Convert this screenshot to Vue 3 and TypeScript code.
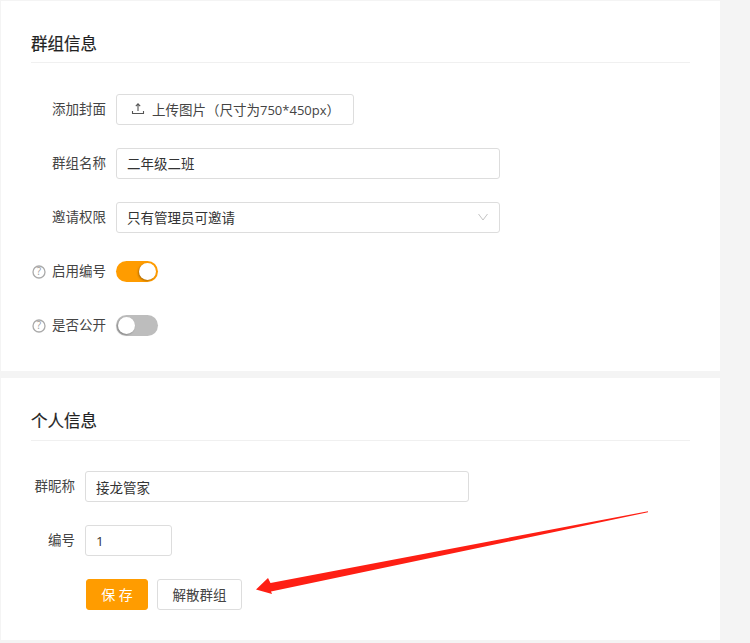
<template>
  <div class="page">
    <section class="card card-group">
      <h3 class="card-title">群组信息</h3>
      <div class="form form-group">
        <div class="form-row">
          <label class="row-label">添加封面</label>
          <button class="upload-btn" type="button">
            <svg class="upload-icon" width="14" height="14" viewBox="0 0 14 14" fill="none" stroke="#555" stroke-width="1.1">
              <path d="M7 9V2M4.8 4.1 7 1.9l2.2 2.2M1.5 9v2.5h11V9" />
            </svg>
            <span>上传图片（尺寸为<span class="latin">750*450px</span>）</span>
          </button>
        </div>
        <div class="form-row">
          <label class="row-label">群组名称</label>
          <input class="text-input wide" type="text" value="二年级二班">
        </div>
        <div class="form-row">
          <label class="row-label">邀请权限</label>
          <div class="text-input wide select">
            <span>只有管理员可邀请</span>
            <svg width="10" height="8" viewBox="0 0 10 8" fill="none" stroke="#c4c4c4" stroke-width="1">
              <path d="M.5 1 5 7l4.5-6" />
            </svg>
          </div>
        </div>
        <div v-for="sw in switches" :key="sw.label" class="form-row switch-row">
          <label class="row-label">
            <svg class="help" width="14" height="14" viewBox="0 0 14 14">
              <circle cx="7" cy="7" r="6" fill="none" stroke="#aaa" stroke-width="1.3" />
              <text x="7" y="10.4" text-anchor="middle" font-size="10" fill="#999">?</text>
            </svg>
            <span>{{ sw.label }}</span>
          </label>
          <span class="switch" :class="{ on: sw.on }"><i class="knob"></i></span>
        </div>
      </div>
    </section>

    <section class="card card-personal">
      <h3 class="card-title personal-title">个人信息</h3>
      <div class="form form-personal">
        <div class="form-row">
          <label class="row-label short">群昵称</label>
          <input class="text-input wide low" type="text" value="接龙管家">
        </div>
        <div class="form-row">
          <label class="row-label short">编号</label>
          <input class="text-input small low" type="text" value="1">
        </div>
        <div class="actions">
          <button class="btn primary" type="button">保 存</button>
          <button class="btn" type="button">解散群组</button>
        </div>
      </div>
    </section>

    <svg class="arrow" width="750" height="643" viewBox="0 0 750 643">
      <path d="M648 511.2 270.5 583 268 578 256 589.5 272 594 271 591.5 648 512.2Z" fill="#fe1f14" />
    </svg>
  </div>
</template>

<script setup lang="ts">
const switches = [
  { label: '启用编号', on: true },
  { label: '是否公开', on: false },
]
</script>

<style>
html,
body {
  margin: 0;
  background: #f4f4f4;
}
</style>

<style scoped>
.page {
  position: relative;
  width: 750px;
  height: 643px;
  overflow: hidden;
  padding: 1px 30px 0 1px;
  box-sizing: border-box;
  background: #f4f4f4;
  font-family: "Open Sans", "Noto Sans CJK SC", sans-serif;
  color: #333;
}

.card {
  background: #fff;
  padding: 30px 30px 0;
  box-sizing: border-box;
}

.card-group {
  height: 370px;
  margin-bottom: 7px;
}

.card-personal {
  height: 262px;
}

.card-title {
  margin: 0;
  box-sizing: border-box;
  height: 32px;
  line-height: 26px;
  font-size: 16.5px;
  font-weight: 400;
  color: #222;
  -webkit-text-stroke: 0.2px #222;
  border-bottom: 1px solid #f0f0f0;
}

.personal-title {
  height: 33px;
}

.form {
  display: flex;
  flex-direction: column;
  gap: 23px;
}

.form-group {
  padding-top: 31px;
}

.form-personal {
  padding-top: 30px;
}

.form-row {
  display: flex;
  align-items: center;
  gap: 10px;
}

.switch-row {
  height: 21px;
  margin: 5px 0;
}

.row-label {
  width: 75px;
  flex: none;
  display: flex;
  align-items: center;
  justify-content: flex-end;
  gap: 6px;
  height: 31px;
  line-height: 27px;
  font-size: 13.5px;
  color: #444;
  white-space: nowrap;
}

.help {
  flex: none;
  margin-left: -1px;
}

.row-label.short {
  width: 44px;
}

.upload-btn {
  display: flex;
  align-items: center;
  gap: 7px;
  width: 238px;
  height: 31px;
  padding: 0 0 2px 14px;
  background: #fff;
  border: 1px solid #ddd;
  border-radius: 3px;
  box-sizing: border-box;
  font: inherit;
  font-size: 13.5px;
  color: #444;
}

.upload-icon {
  flex: none;
}

.latin {
  font-size: 13px;
}

.text-input {
  height: 31px;
  padding: 0 10px 2px;
  background: #fff;
  border: 1px solid #ddd;
  border-radius: 3px;
  box-sizing: border-box;
  font: inherit;
  font-size: 13.5px;
  color: #333;
  outline: none;
}

.text-input.low {
  padding-bottom: 0;
}

.wide {
  width: 384px;
}

.small {
  width: 87px;
}

.select {
  display: flex;
  align-items: center;
  justify-content: space-between;
  padding-right: 11px;
}

.switch {
  position: relative;
  display: block;
  width: 42px;
  height: 21px;
  border-radius: 11px;
  background: #bdbdbd;
}

.switch.on {
  background: #ff9c00;
}

.knob {
  position: absolute;
  top: 2px;
  left: 2px;
  width: 17px;
  height: 17px;
  border-radius: 50%;
  background: #fff;
  box-shadow: -1px 1px 2px rgba(0, 0, 0, 0.3);
}

.switch.on .knob {
  left: 23px;
}

.actions {
  display: flex;
  gap: 9px;
  padding-left: 55px;
}

.btn {
  height: 31px;
  width: 85px;
  padding: 0 0 2px;
  background: #fff;
  border: 1px solid #ddd;
  border-radius: 3px;
  box-sizing: border-box;
  font: inherit;
  font-size: 13.5px;
  color: #444;
}

.btn.primary {
  width: 62px;
  background: #ff9c00;
  border-color: #ff9c00;
  color: #fff;
  font-size: 14px;
}

.arrow {
  position: absolute;
  left: 0;
  top: 0;
  pointer-events: none;
}
</style>
